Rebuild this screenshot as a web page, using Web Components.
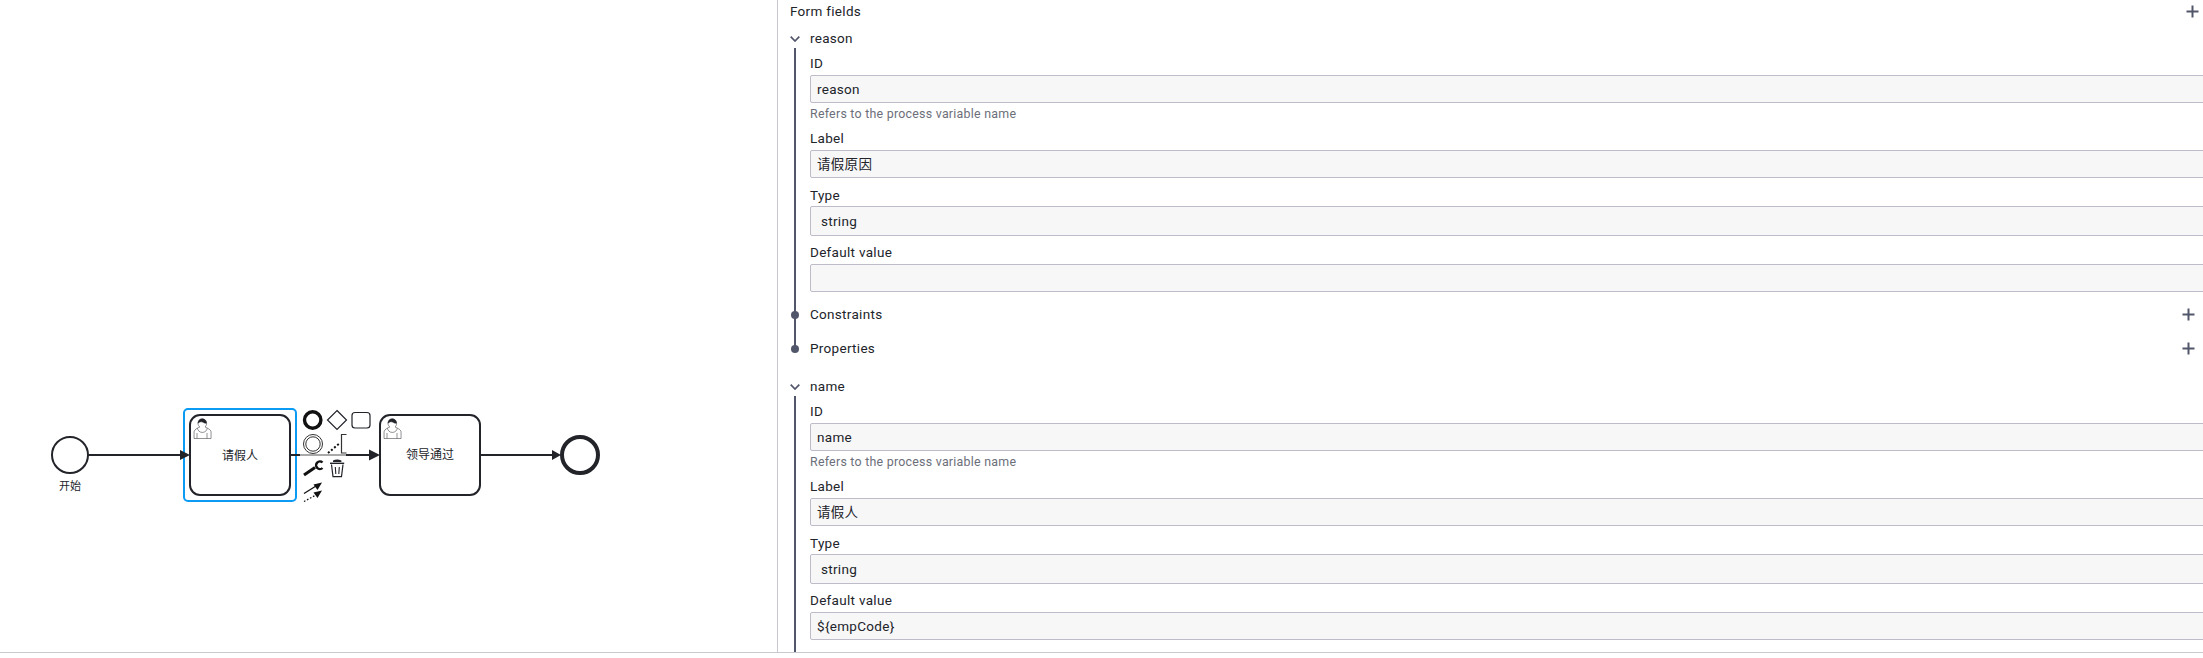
<!DOCTYPE html>
<html lang="zh">
<head>
<meta charset="utf-8">
<title>BPMN editor</title>
<style>
  html, body { margin: 0; background: #fff; height: 100%; overflow: hidden; }
</style>
</head>
<body>
<app-shell>
  <bpmn-canvas slot="canvas"></bpmn-canvas>
  <props-panel slot="panel" title="Form fields">
    <field-entry name="reason">
      <prop-field label="ID" value="reason" hint="Refers to the process variable name"></prop-field>
      <prop-field label="Label" value="请假原因"></prop-field>
      <prop-field label="Type" value="string" kind="select"></prop-field>
      <prop-field label="Default value" value=""></prop-field>
      <prop-section label="Constraints"></prop-section>
      <prop-section label="Properties" last></prop-section>
    </field-entry>
    <field-entry name="name" open-end>
      <prop-field label="ID" value="name" hint="Refers to the process variable name"></prop-field>
      <prop-field label="Label" value="请假人"></prop-field>
      <prop-field label="Type" value="string" kind="select"></prop-field>
      <prop-field label="Default value" value="${empCode}"></prop-field>
    </field-entry>
  </props-panel>
</app-shell>

<script>
const PANEL_FONT = `"Roboto", "Noto Sans CJK SC", sans-serif`;
const PLUS = `<svg width="13" height="13" viewBox="0 0 13 13"><path d="M6.5 0.5v12M0.5 6.5h12" stroke="#52566a" stroke-width="2" fill="none"/></svg>`;

// coque : canvas à gauche, panneau à droite, filet en bas
class AppShell extends HTMLElement {
  constructor() {
    super();
    this.attachShadow({ mode: "open" });
    this.shadowRoot.innerHTML = `
      <style>
        :host { display: block; width: 2203px; height: 653px; box-sizing: border-box; border-bottom: 1px solid #c8c8d0; overflow: hidden; }
        .row { display: flex; height: 652px; }
        .left { flex: 0 0 777px; }
        .right { flex: 1; min-width: 0; border-left: 1px solid #c8c8d0; overflow: hidden; }
      </style>
      <div class="row">
        <div class="left"><slot name="canvas"></slot></div>
        <div class="right"><slot name="panel"></slot></div>
      </div>`;
  }
}
customElements.define("app-shell", AppShell);

class BpmnCanvas extends HTMLElement {
  constructor() {
    super();
    this.attachShadow({ mode: "open" });
    const user = (x, y) => {
      const mx = x + 15, my = y + 12;
      return `
        <path d="m ${mx},${my} c 0.909,-0.845 1.594,-2.049 1.594,-3.385 0,-2.554 -1.805,-4.622 -4.357,-4.622 -2.552,0 -4.288,2.068 -4.288,4.622 0,1.348 0.974,2.562 1.896,3.405 -0.529,0.187 -5.669,2.097 -5.794,4.756 v 6.718 h 17 v -6.718 c 0,-2.298 -5.528,-4.595 -6.051,-4.776 z m -8,6 l 0,5.389 m 10,-5.389 l 0,5.389" fill="#fff" stroke="#22242a" stroke-width="0.5"/>
        <path d="m ${mx},${my} m 2.162,1.009 c 0,2.447 -2.158,4.431 -4.821,4.431 -2.665,0 -4.822,-1.981 -4.822,-4.431" fill="#fff" stroke="#22242a" stroke-width="0.5"/>
        <path d="m ${mx},${my} m -6.9,-3.8 c 0,0 2.251,-2.358 4.274,-1.177 2.024,1.181 4.221,1.537 4.124,0.965 -0.098,-0.57 -0.117,-3.791 -4.191,-4.136 -3.575,0.001 -4.208,3.367 -4.207,4.348 z" fill="#22242a" stroke="#22242a" stroke-width="0.5"/>`;
    };
    const task = (x, y, text, ty) => `
      <rect x="${x}" y="${y}" width="100" height="80" rx="10" fill="#fff" stroke="#22242a" stroke-width="2"/>
      ${user(x, y)}
      <text x="${x + 50}" y="${ty}" text-anchor="middle" class="lbl">${text}</text>`;
    this.shadowRoot.innerHTML = `
      <style>
        :host { display: block; width: 777px; height: 652px; }
        svg { display: block; }
        .lbl { font: 12px "Noto Sans CJK SC", "Liberation Sans", sans-serif; fill: #22242a; }
        .sm { font-size: 11px; }
      </style>
      <svg width="777" height="652" viewBox="0 0 777 652">
        <!-- selection -->
        <rect x="184" y="409" width="112" height="92" rx="4" fill="none" stroke="#0b9bf5" stroke-width="2"/>

        <!-- flows -->
        <path d="M88 455H182" stroke="#22242a" stroke-width="2" fill="none"/>
        <path d="M190 455L180 450V460Z" fill="#22242a"/>
        <path d="M290 455H300" stroke="#22242a" stroke-width="2" fill="none"/>
        <path d="M300 455H346" stroke="#8c8c8c" stroke-width="1.5" fill="none"/>
        <path d="M346 455H371" stroke="#22242a" stroke-width="2" fill="none"/>
        <path d="M380 455L369 449.5V460.5Z" fill="#22242a"/>
        <path d="M480 455H553" stroke="#22242a" stroke-width="2" fill="none"/>
        <path d="M561 455L552 450V460Z" fill="#22242a"/>

        <!-- events -->
        <circle cx="70" cy="455" r="18" fill="#fff" stroke="#22242a" stroke-width="2"/>
        <text x="70" y="490" text-anchor="middle" class="lbl sm">开始</text>
        <circle cx="580" cy="455" r="18" fill="#fff" stroke="#22242a" stroke-width="4"/>

        ${task(190, 415, "请假人", 459.5)}
        ${task(380, 415, "领导通过", 458.5)}

        <!-- context pad -->
        <circle cx="312.7" cy="420" r="8.2" fill="none" stroke="#111" stroke-width="3.4"/>
        <path d="M337 410.5L346.5 420L337 429.5L327.5 420Z" fill="none" stroke="#22242a" stroke-width="1.2"/>
        <rect x="352" y="412.5" width="18" height="15.5" rx="3" fill="none" stroke="#22242a" stroke-width="1.2"/>
        <circle cx="313" cy="444" r="9.5" fill="none" stroke="#333" stroke-width="1"/>
        <circle cx="313" cy="444" r="7.2" fill="none" stroke="#333" stroke-width="1"/>
        <path d="M328 453L340 443" stroke="#111" stroke-width="2" stroke-dasharray="2 2" fill="none"/>
        <path d="M346.5 434.5H341.5V453H346.5" stroke="#333" stroke-width="1.2" fill="none"/>
        <!-- clé -->
        <path d="M304 475L315 467.5" stroke="#111" stroke-width="3" fill="none"/>
        <path d="M322.5 462.5A3.8 3.8 0 1 0 322.5 468" stroke="#111" stroke-width="2.4" fill="none"/>
        <!-- corbeille -->
        <path d="M330 463.3H344.2" stroke="#22242a" stroke-width="1.4" fill="none"/>
        <path d="M333 462V460.5Q337 458.6 341.4 460.5V462Z" fill="#22242a"/>
        <path d="M331.5 464.5L333 476.6H341.5L343 464.5" stroke="#22242a" stroke-width="1.2" fill="none"/>
        <path d="M335.3 467L335.8 474M339.3 467L338.8 474" stroke="#22242a" stroke-width="1.1" fill="none"/>
        <!-- connexion -->
        <path d="M304 493.5L316 486" stroke="#111" stroke-width="1.3" fill="none"/>
        <path d="M322 482.5L313.5 484.5L317.5 490Z" fill="#111"/>
        <path d="M304 501.5L316 495" stroke="#111" stroke-width="1.3" stroke-dasharray="1.6 1.8" fill="none"/>
        <path d="M322 490.5L313.5 492.5L317.5 498Z" fill="#111"/>
      </svg>`;
  }
}
customElements.define("bpmn-canvas", BpmnCanvas);

class PropsPanel extends HTMLElement {
  constructor() {
    super();
    this.attachShadow({ mode: "open" });
    this.shadowRoot.innerHTML = `
      <style>
        :host { display: block; height: 652px; overflow: hidden; font: 13.5px ${PANEL_FONT}; color: #22242a; letter-spacing: .3px; }
        .head { display: flex; align-items: center; justify-content: space-between; height: 22px; padding: 0 4px 0 12px; margin-bottom: 8px; }
        svg { display: block; }
        .list { display: flex; flex-direction: column; gap: 29px; padding-right: 4px; }
      </style>
      <div class="head"><span id="t"></span>${PLUS}</div>
      <div class="list"><slot></slot></div>`;
  }
  connectedCallback() {
    this.shadowRoot.querySelector("#t").textContent = this.getAttribute("title");
  }
}
customElements.define("props-panel", PropsPanel);

class FieldEntry extends HTMLElement {
  constructor() {
    super();
    this.attachShadow({ mode: "open" });
    this.shadowRoot.innerHTML = `
      <style>
        :host { display: block; }
        .head { display: flex; align-items: center; height: 18px; padding-left: 12px; line-height: 18px; }
        .head svg { flex: none; margin-right: 10px; }
        .head span { margin-top: -2px; }
        .body { margin-left: 16px; border-left: 2px solid #52566a; padding: 6px 0 0 14px; display: flex; flex-direction: column; gap: 7px; }
        :host([open-end]) .body { padding-bottom: 30px; }
      </style>
      <div class="head">
        <svg width="10" height="6" viewBox="0 0 10 6"><path d="M0.7 0.7L5 5L9.3 0.7" stroke="#52566a" stroke-width="1.7" fill="none"/></svg>
        <span id="n"></span>
      </div>
      <div class="body"><slot></slot></div>`;
  }
  connectedCallback() {
    this.shadowRoot.querySelector("#n").textContent = this.getAttribute("name");
  }
}
customElements.define("field-entry", FieldEntry);

class PropField extends HTMLElement {
  constructor() {
    super();
    this.attachShadow({ mode: "open" });
    this.shadowRoot.innerHTML = `
      <style>
        :host { display: block; margin-right: -30px; padding-bottom: 1px; }
        :host([hint]) { padding-bottom: 0; }
        .label { line-height: 18px; height: 18px; margin-bottom: 3px; }
        .box { box-sizing: border-box; height: 28px; line-height: 27px; padding-left: 6px; background: #f7f7f8; border: 1px solid #bdbcc8; border-radius: 2px; }
        :host([kind=select]) .box { height: 30px; line-height: 29px; margin: -1px 0; padding-left: 10px; }
        .hint { line-height: 20px; height: 18px; margin-top: 1px; color: #6c6f7a; font-size: 12.4px; letter-spacing: .25px; }
        :host(:not([hint])) .hint { display: none; }
      </style>
      <div class="label"></div>
      <div class="box"></div>
      <div class="hint"></div>`;
  }
  connectedCallback() {
    const root = this.shadowRoot;
    root.querySelector(".label").textContent = this.getAttribute("label");
    root.querySelector(".box").textContent = this.getAttribute("value");
    root.querySelector(".hint").textContent = this.getAttribute("hint") || "";
  }
}
customElements.define("prop-field", PropField);

class PropSection extends HTMLElement {
  constructor() {
    super();
    this.attachShadow({ mode: "open" });
    this.shadowRoot.innerHTML = `
      <style>
        :host { display: flex; align-items: center; justify-content: space-between; height: 22px; position: relative; margin-top: 4px; margin-bottom: 6px; }
        :host([last]) { margin-top: -1px; margin-bottom: -11px; }
        .dot { position: absolute; left: -19px; top: 7px; width: 8px; height: 8px; border-radius: 50%; background: #52566a; }
        #l { margin-top: -2px; }
        svg { display: block; margin-right: 4px; margin-top: -2px; }
      </style>
      <span class="dot"></span>
      <span id="l"></span>${PLUS}`;
  }
  connectedCallback() {
    this.shadowRoot.querySelector("#l").textContent = this.getAttribute("label");
  }
}
customElements.define("prop-section", PropSection);
</script>
</body>
</html>
